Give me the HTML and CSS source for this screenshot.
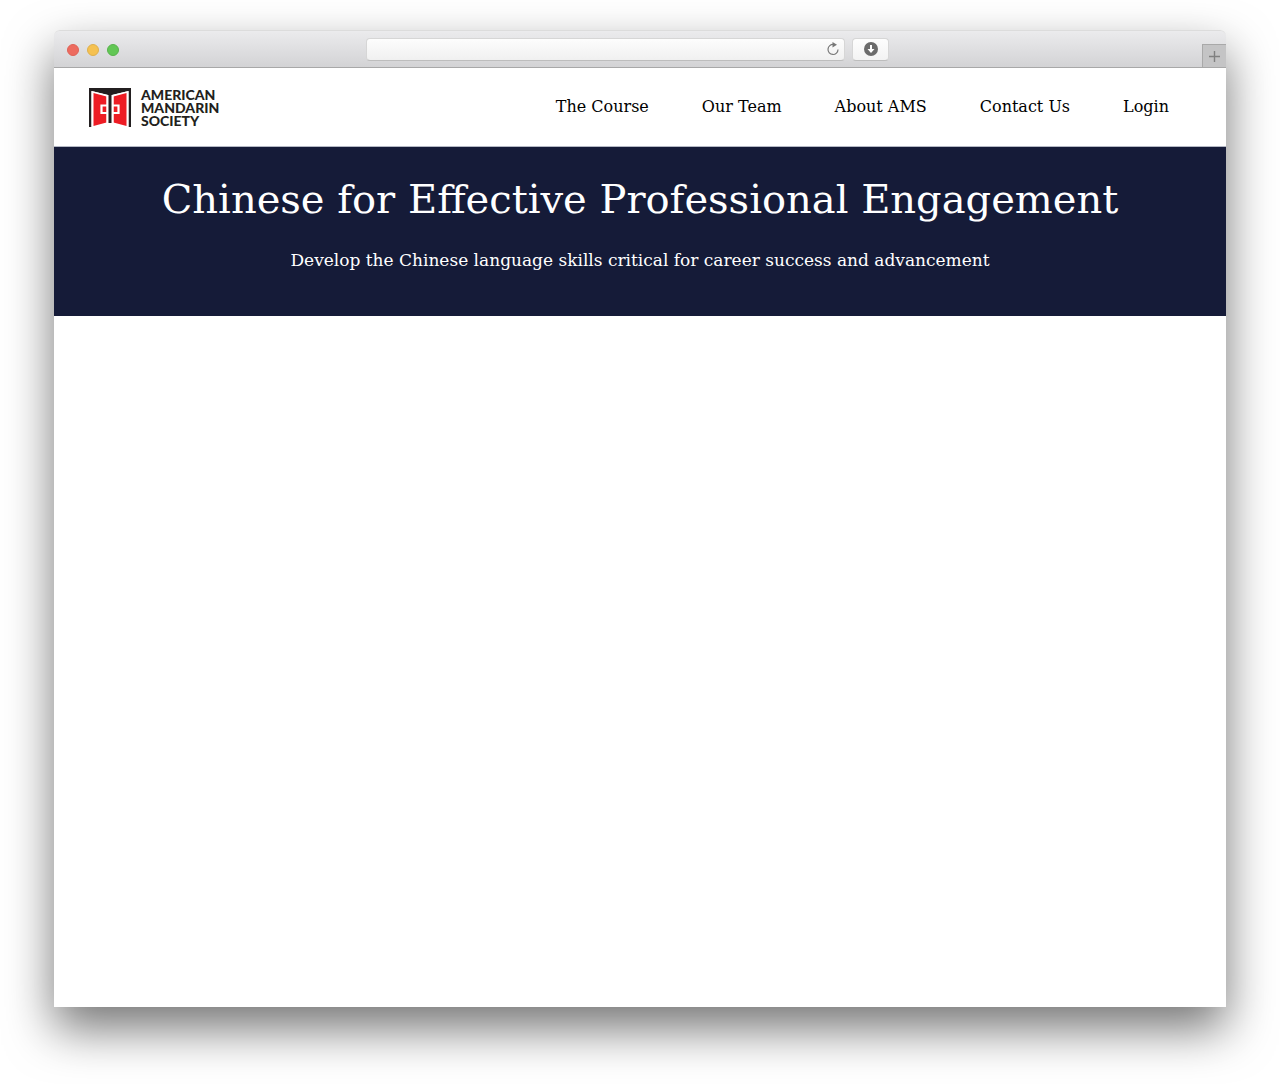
FILE: index.html
```
<!doctype html>
<html lang="en">
<head>
	<meta charset="utf-8" />
	<meta name="viewport" content="width=device-width, initial-scale=1">
	<title>American Mandarin Society</title>
	<link rel="stylesheet" href="styles.css">
</head>
<body>
	<div class="window">
		<div class="toolbar">
			<div class="lights">
				<button class="light red" type="button" aria-label="Close"></button>
				<button class="light yellow" type="button" aria-label="Minimize"></button>
				<button class="light green" type="button" aria-label="Zoom"></button>
			</div>
			<div class="address">
				<input class="url" type="text" aria-label="Address">
				<button class="reload" type="button" aria-label="Reload">
					<svg width="14" height="14" viewBox="0 0 14 14">
						<path d="M7.5 2.5A5 5 0 1 0 12 7.5" fill="none" stroke="#777" stroke-width="1.2"/>
						<path d="M6.5 0L11 2.7L6.5 5.4Z" fill="#777"/>
					</svg>
				</button>
			</div>
			<button class="download" type="button" aria-label="Downloads">
				<svg width="14" height="14" viewBox="0 0 14 14">
					<circle cx="7" cy="7" r="7" fill="#6b6b6b"/>
					<path d="M6 3h2v4h2.5L7 11L3.5 7H6Z" fill="#fff"/>
				</svg>
			</button>
			<button class="newtab" type="button" aria-label="New tab">
				<svg width="11" height="11" viewBox="0 0 11 11">
					<path d="M5.5 0v11M0 5.5h11" stroke="#808080" stroke-width="1.4"/>
				</svg>
			</button>
		</div>

		<header class="header">
			<a class="logo" href="#">
				<svg width="42" height="39" viewBox="0 0 42 39">
					<!-- door frame -->
					<path d="M0 0H42V39H39.5V3L23 7V35H19V7L2.5 3V39H0Z" fill="#231f20"/>
					<path d="M2.5 3L19 7V35L2.5 39ZM39.5 3L23 7V35L39.5 39Z" fill="#fff"/>
					<!-- door panels -->
					<path d="M4.5 5L17.5 8.5V34.5L4.5 38ZM37.5 5L24.5 8.5V34.5L37.5 38Z" fill="#ed1c24"/>
					<path d="M17.5 7H24.5V36H17.5Z" fill="#fff"/>
					<path d="M19.5 5H22.5V35H19.5Z" fill="#231f20"/>
					<!-- handles -->
					<path d="M18 17.5H12.5V25H18M24 17.5H29.5V25H24" fill="none" stroke="#fff" stroke-width="2.2"/>
				</svg>
				<span class="logo-text">AMERICAN<br>MANDARIN<br>SOCIETY</span>
			</a>
			<nav class="nav">
				<a href="#">The Course</a>
				<a href="#">Our Team</a>
				<a href="#">About AMS</a>
				<a href="#">Contact Us</a>
				<a href="#">Login</a>
			</nav>
		</header>

		<section class="hero">
			<h1>Chinese for Effective Professional Engagement</h1>
			<p>Develop the Chinese language skills critical for career success and advancement</p>
		</section>

		<main class="content"></main>
	</div>
</body>
</html>
```
FILE: styles.css
```
*
{
	box-sizing: border-box;
}

body
{
	display: flex;
	min-height: 100vh;
	margin: 0;
	padding: 30px 54px 77px;
	background: #fff;
	font-family: "Roboto Slab", "DejaVu Serif", serif;
}

button
{
	padding: 0;
	border: none;
}

.window
{
	flex: 1;
	display: flex;
	flex-direction: column;
	min-width: 0;
	background: #fff;
	border-radius: 6px 6px 0 0;
	box-shadow: 0 22px 48px rgba(0, 0, 0, 0.54);
}

/* browser bar */
.toolbar
{
	display: grid;
	grid-template-columns: 299px minmax(0, 479px) 37px 1fr;
	column-gap: 7px;
	align-items: center;
	height: 38px;
	padding-left: 6px;
	background: linear-gradient(#ebebed, #d3d3d5);
	border-top: 1px solid #dcdcdc;
	border-bottom: 1px solid #a8a8a8;
	border-radius: 6px 6px 0 0;
}

.lights
{
	display: flex;
	gap: 8px;
	padding: 2px 0 0 7px;
}

.light
{
	width: 12px;
	height: 12px;
	border-radius: 50%;
}

.red
{
	background: #ed6b5f;
	border: 1px solid #df6257;
}

.yellow
{
	background: #f5c150;
	border: 1px solid #dfb04c;
}

.green
{
	background: #62c755;
	border: 1px solid #58b34c;
}

.address
{
	display: flex;
	align-items: center;
	height: 23px;
	padding-right: 4px;
	background: linear-gradient(#fdfdfd, #f0f0f0);
	border: 1px solid #d6d6d6;
	border-bottom-color: #bdbdbd;
	border-radius: 4px;
}

.url
{
	flex: 1;
	min-width: 0;
	padding: 0 6px;
	border: none;
	outline: none;
	background: none;
	font: 13px "Open Sans", sans-serif;
}

.reload
{
	display: flex;
	background: none;
}

.download
{
	display: flex;
	align-items: center;
	justify-content: center;
	height: 23px;
	background: linear-gradient(#fdfdfd, #f3f3f3);
	border: 1px solid #d6d6d6;
	border-bottom-color: #bdbdbd;
	border-radius: 4px;
}

.newtab
{
	display: flex;
	align-items: center;
	justify-content: center;
	justify-self: end;
	align-self: end;
	width: 24px;
	height: 23px;
	background: #c4c4c5;
	border: 1px solid #a9a9a9;
	border-width: 1px 0 0 1px;
}

/* site header */
.header
{
	display: flex;
	align-items: center;
	justify-content: space-between;
	min-height: 79px;
	padding: 0 57px 0 35px;
	border-bottom: 1px solid #b4b8c4;
}

.logo
{
	display: flex;
	align-items: center;
	gap: 10px;
	color: #231f20;
	text-decoration: none;
}

.logo-text
{
	font: 900 14px/13px Lato, sans-serif;
}

.nav
{
	display: flex;
	gap: 53px;
}

.nav a
{
	color: #000;
	font-size: 16px;
	line-height: 24px;
	text-decoration: none;
	white-space: nowrap;
}

.hero
{
	padding: 24px 20px 41px;
	background: #151b38;
	color: #fff;
	text-align: center;
}

.hero h1
{
	margin: 0 0 18px;
	font-size: 40px;
	font-weight: normal;
	line-height: 56px;
}

.hero p
{
	margin: 0;
	font-size: 17px;
	line-height: 30px;
}

.content
{
	flex: 1;
	background: #fff;
}
```
